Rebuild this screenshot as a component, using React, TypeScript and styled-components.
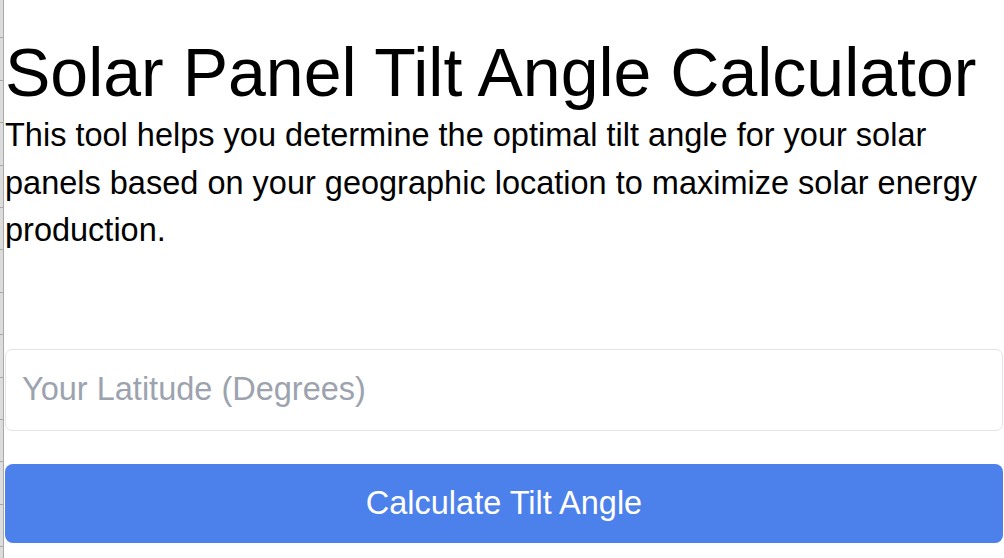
import styled, { createGlobalStyle } from 'styled-components'

const GlobalStyle = createGlobalStyle`
  html, body {
    margin: 0;
    padding: 0;
    background: #ffffff;
  }

  body {
    font-family: "Liberation Sans", Arial, sans-serif;
    color: #000000;
  }
`

export default function App () {
  return (
    <>
      <GlobalStyle />
      <Page>
        <Rail />
        <Main>
          <Title>Solar Panel Tilt Angle Calculator</Title>
          <Intro>
            This tool helps you determine the optimal tilt angle for your solar
            panels based on your geographic location to maximize solar energy
            production.
          </Intro>

          <Form onSubmit={e => e.preventDefault()}>
            <LatitudeInput type='number' placeholder='Your Latitude (Degrees)' />
            <CalcButton type='submit'>Calculate Tilt Angle</CalcButton>
          </Form>
        </Main>
      </Page>
    </>
  )
}

const Page = styled.div`
  display: flex;
  min-height: 100vh;
  overflow: hidden;
`

// grey strip of the neighbouring pane on the left edge
const Rail = styled.div`
  flex: 0 0 3px;
  border-right: 1px solid #a9a9a9;
  background-color: #dcdcdc;
  background-image: repeating-linear-gradient(
    to bottom,
    transparent 0,
    transparent 41.4px,
    #a8a8a8 41.4px,
    #a8a8a8 42.4px
  );
  background-position: 0 -4px;
`

const Main = styled.main`
  flex: 1;
  min-width: 0;
  padding: 35px 1px 0 1px;
`

const Title = styled.h1`
  margin: 0;
  font-size: 68px;
  font-weight: 400;
  line-height: 75px;
  white-space: nowrap;
`

const Intro = styled.p`
  margin: 2px 0 0;
  font-size: 32.5px;
  line-height: 47.5px;
`

const Form = styled.form`
  display: flex;
  flex-direction: column;
  gap: 33px;
  margin-top: 94px;
`

const LatitudeInput = styled.input`
  box-sizing: border-box;
  width: 100%;
  height: 82px;
  padding: 0 16px;
  border: 1.5px solid #e3e4e8;
  border-radius: 7px;
  font-family: inherit;
  font-size: 32.5px;
  color: #111827;
  background: #ffffff;
  outline: none;
  appearance: textfield;

  &::placeholder {
    color: #9ca3af;
  }

  &::-webkit-outer-spin-button,
  &::-webkit-inner-spin-button {
    -webkit-appearance: none;
    margin: 0;
  }
`

const CalcButton = styled.button`
  box-sizing: border-box;
  width: 100%;
  height: 79px;
  border: none;
  border-radius: 8px;
  background: #4c80ea;
  color: #ffffff;
  font-family: inherit;
  font-size: 32.5px;
  cursor: pointer;
`
